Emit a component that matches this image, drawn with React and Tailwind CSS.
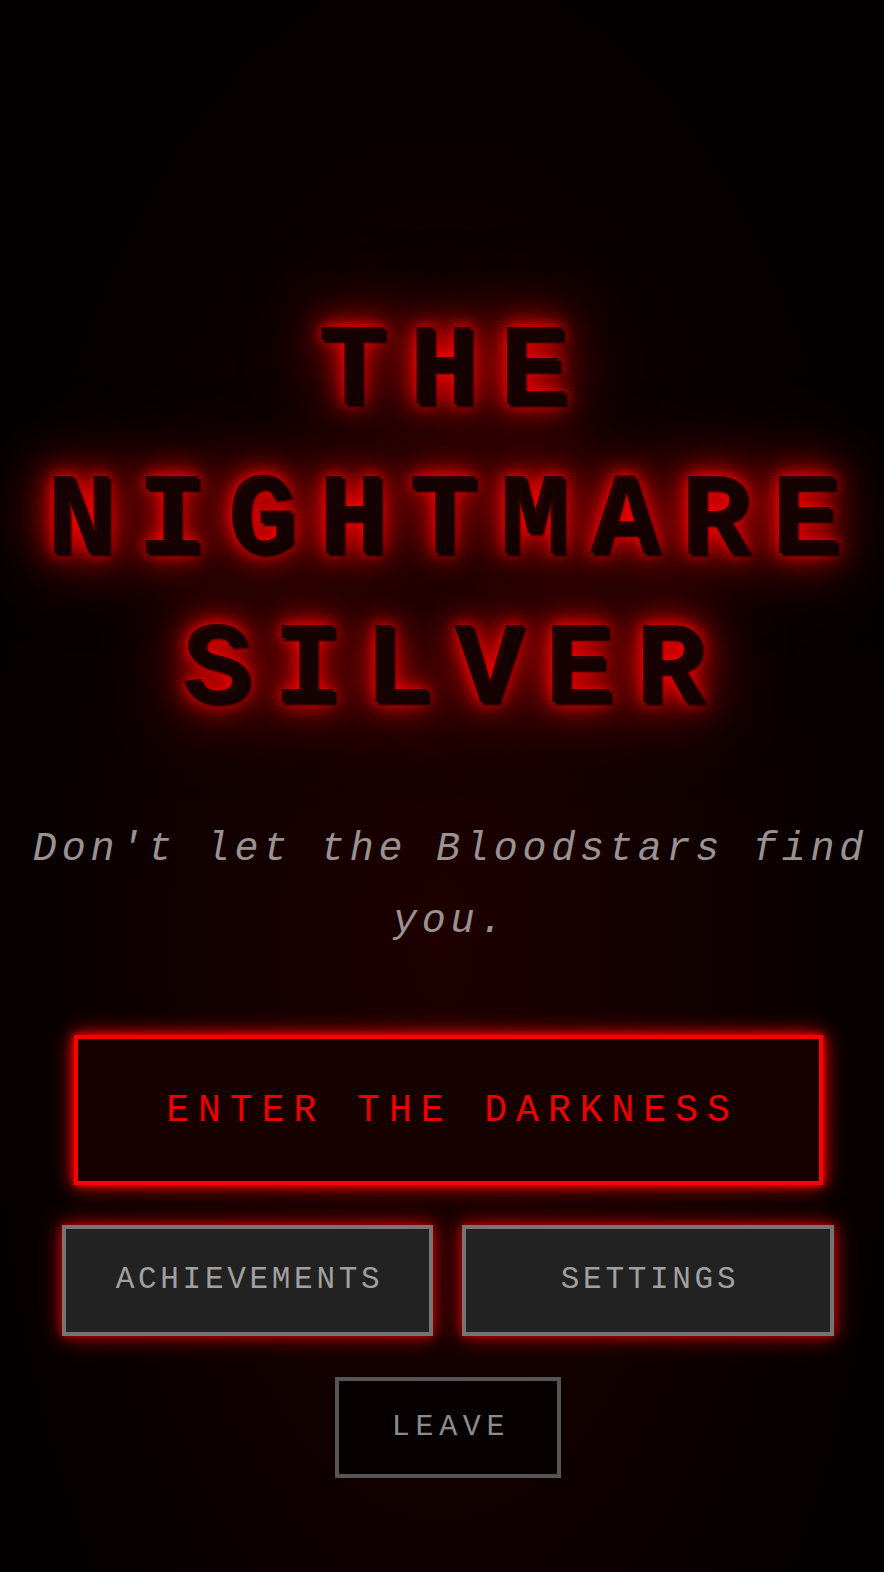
import React from "react";

const mono = "font-['Courier_New','Liberation_Mono',monospace]";

const TitleLine = ({ children }) => (
  <span className="block">{children}</span>
);

const MenuButton = ({ label, className }) => (
  <button
    className={`${mono} flex items-center justify-center uppercase ${className}`}
  >
    {label}
  </button>
);

export default function App() {
  return (
    <div className="min-h-[1572px] w-full overflow-hidden bg-[radial-gradient(ellipse_at_50%_60%,#1e0000_0%,#0f0000_45%,#030000_80%)]">
      <div className="flex flex-col items-center pl-[24px] pr-[12px] pt-[299px]">
        {/* Title with red glow */}
        <h1
          className={`${mono} pl-[12px] text-center text-[116px] font-bold leading-[149px] tracking-[21px] text-[rgba(22,2,2,0.88)] [text-shadow:3px_3px_2px_rgba(0,0,0,0.9),0_0_14px_#ff0000,0_0_30px_#ff0000,0_0_60px_#c00000,0_0_90px_#700000]`}
        >
          <TitleLine>THE</TitleLine>
          <TitleLine>NIGHTMARE</TitleLine>
          <TitleLine>SILVER</TitleLine>
        </h1>

        {/* Tagline */}
        <p
          className={`${mono} mt-[68px] max-w-[848px] pl-[5px] text-center text-[40px] italic leading-[72px] tracking-[4.8px] text-[#9a9292]`}
        >
          Don't let the Bloodstars find you.
        </p>

        {/* Main action */}
        <MenuButton
          label="Enter the Darkness"
          className="mt-[77px] h-[150px] w-[749px] border-4 border-[#ff0000] bg-[#160000] pl-[9px] text-[38px] tracking-[9px] text-[#ee0000] shadow-[0_0_20px_#ff0000,0_0_8px_#ff0000]"
        />

        {/* Secondary actions */}
        <div className="mt-[40px] flex gap-[29px]">
          <MenuButton
            label="Achievements"
            className="h-[111px] w-[371px] border-4 border-[#757575] bg-[#222222] pl-[4px] text-[31px] tracking-[3.7px] text-[#a0a0a0] shadow-[0_0_22px_#b00000,0_0_8px_#c00000]"
          />
          <MenuButton
            label="Settings"
            className="h-[111px] w-[372px] border-4 border-[#757575] bg-[#222222] pl-[4px] text-[31px] tracking-[3.7px] text-[#a0a0a0] shadow-[0_0_22px_#b00000,0_0_8px_#c00000]"
          />
        </div>

        <MenuButton
          label="Leave"
          className="mt-[41px] h-[101px] w-[226px] border-4 border-[#555555] bg-[#070000] pl-[6px] text-[30px] tracking-[5.7px] text-[#8c8c8c]"
        />
      </div>
    </div>
  );
}
